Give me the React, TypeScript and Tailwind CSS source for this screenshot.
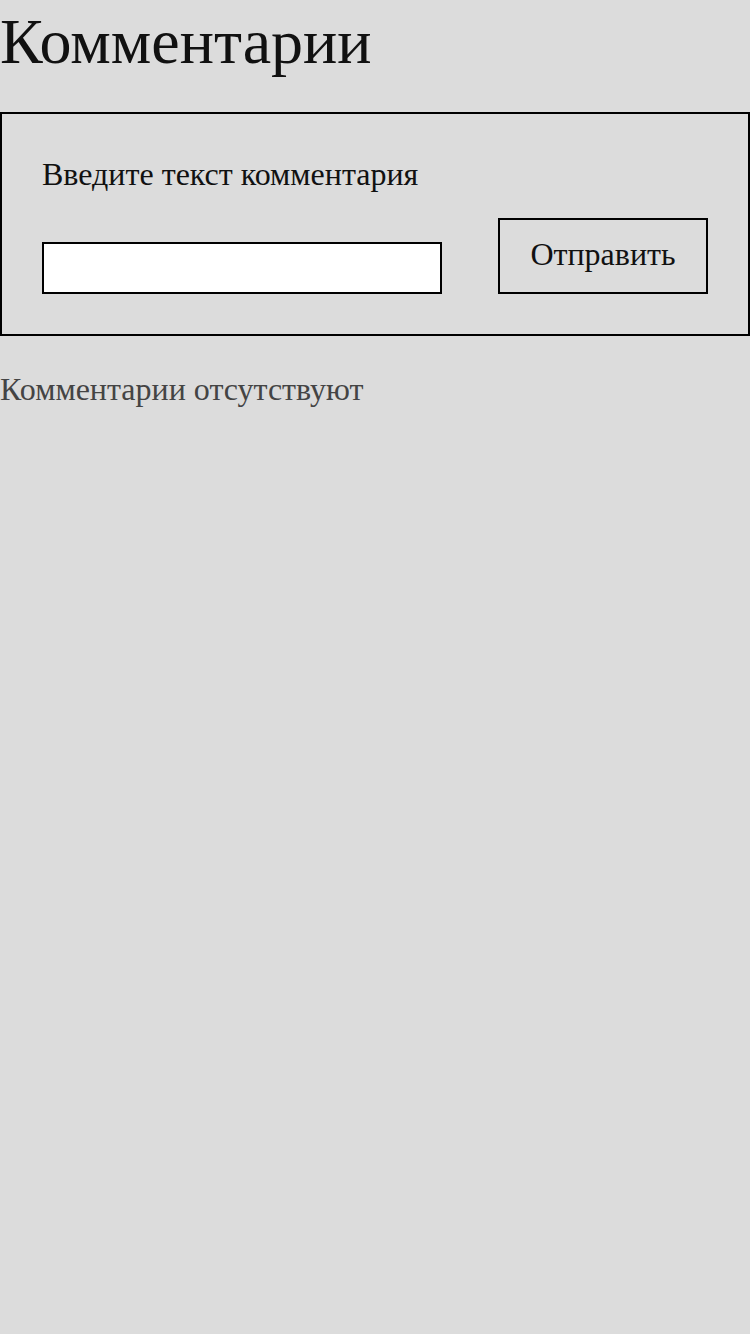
export default function App() {
  return (
    <div className="min-h-[1334px] bg-[#dcdcdc] font-['Liberation_Serif',serif] text-[#111]">
      <h1 className="text-[64px] leading-[84px]">Комментарии</h1>

      <form
        className="mt-[28px] flex items-end justify-between border-2 border-black p-[40px]"
        onSubmit={(e) => e.preventDefault()}
      >
        <div className="flex flex-col">
          <label htmlFor="comment" className="text-[32px] leading-[40px]">
            Введите текст комментария
          </label>
          <input
            id="comment"
            type="text"
            className="mt-[48px] h-[52px] w-[400px] border-2 border-black bg-white px-2 text-[24px] outline-none"
          />
        </div>
        <button
          type="submit"
          className="h-[76px] w-[210px] border-2 border-black bg-transparent pb-1 text-[32px] leading-none"
        >
          Отправить
        </button>
      </form>

      <p className="mt-[31px] text-[32px] leading-[44px] text-[#444]">Комментарии отсутствуют</p>
    </div>
  )
}
